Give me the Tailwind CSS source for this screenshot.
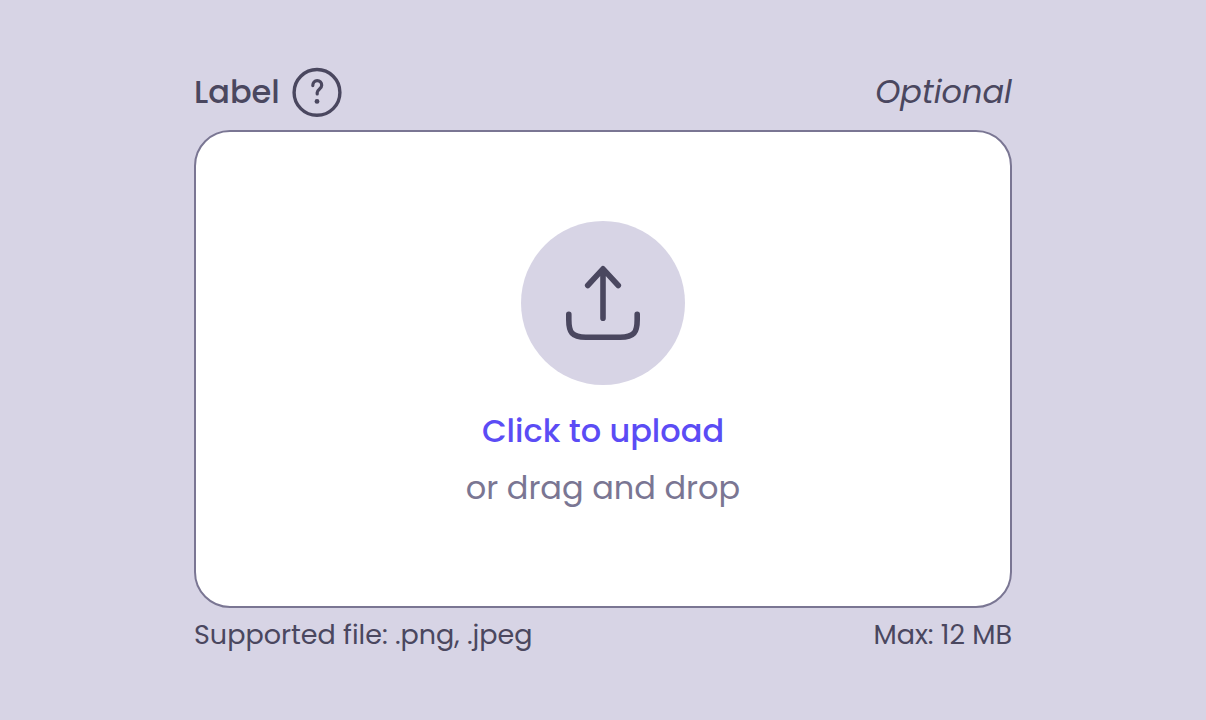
<!DOCTYPE html>
<html lang="en">
<head>
    <meta charset="UTF-8">
    <meta name="viewport" content="width=device-width, initial-scale=1.0">
    <title>File upload</title>
    <script src="https://cdn.jsdelivr.net/npm/@tailwindcss/browser@4"></script>
</head>
<body class="min-h-screen pt-0.5 bg-[#d7d4e5] font-['Poppins','Inter',sans-serif] text-[#4a475f] flex items-center justify-center">

<main class="w-full max-w-[818px]">
    <!-- Label row -->
    <div class="flex items-center justify-between mb-[13px]">
        <div class="flex items-center gap-3">
            <label for="fileInput" class="text-[32px] leading-[50px] font-medium">Label</label>
            <button type="button" aria-label="Help" class="size-[50px]">
                <svg viewBox="0 0 50 50" fill="none" stroke="currentColor" stroke-linecap="round" stroke-linejoin="round" class="size-full">
                    <circle cx="25" cy="25.400" r="22.900" stroke-width="3.4"/>
                    <path d="M20.800 18.600C20.800 15.600 22.600 13.700 25.200 13.700s4.500 1.900 4.500 4.500c0 4-4.500 4-4.500 7.400v1.300" stroke-width="3.200"/>
                    <circle cx="25" cy="34.400" r="2.400" fill="currentColor" stroke="none"/>
                </svg>
            </button>
        </div>
        <span class="text-[32px] leading-[50px] italic">Optional</span>
    </div>

    <!-- Drop zone -->
    <label id="dropZone" class="flex flex-col items-center bg-white border-2 border-[#7a7693] rounded-[36px] pt-[89px] pb-[93px] cursor-pointer">
        <input id="fileInput" type="file" accept=".png,.jpeg" class="sr-only">
        <span class="size-[164px] rounded-full bg-[#d7d4e5] flex items-center justify-center mb-[21px]">
            <svg viewBox="0 0 80 80" fill="none" stroke="currentColor" stroke-width="5.6" stroke-linecap="round" stroke-linejoin="round" class="size-20">
                <path d="M40 55.200V6M24.700 22.500 40 5.800l15.300 16.700"/>
                <path d="M5.800 51.400v5c0 13 3 17.800 17 17.800h34.400c14 0 17-4.800 17-17.800v-5"/>
            </svg>
        </span>
        <span class="text-[32px] leading-[50px] font-medium text-[#5b4cf5] mb-[7px]">Click to upload</span>
        <span class="text-[32px] leading-[50px] text-[#7a7693]">or drag and drop</span>
    </label>

    <!-- Hints -->
    <div class="flex justify-between mt-[7px] text-[27px] leading-[40px]">
        <span>Supported file: .png, .jpeg</span>
        <span>Max: 12 MB</span>
    </div>
</main>

<script>
    const dropZone = document.getElementById('dropZone');
    const fileInput = document.getElementById('fileInput');

    dropZone.addEventListener('dragover', (event) => event.preventDefault());
    dropZone.addEventListener('drop', (event) => {
        event.preventDefault();
        fileInput.files = event.dataTransfer.files;
    });
</script>
</body>
</html>
